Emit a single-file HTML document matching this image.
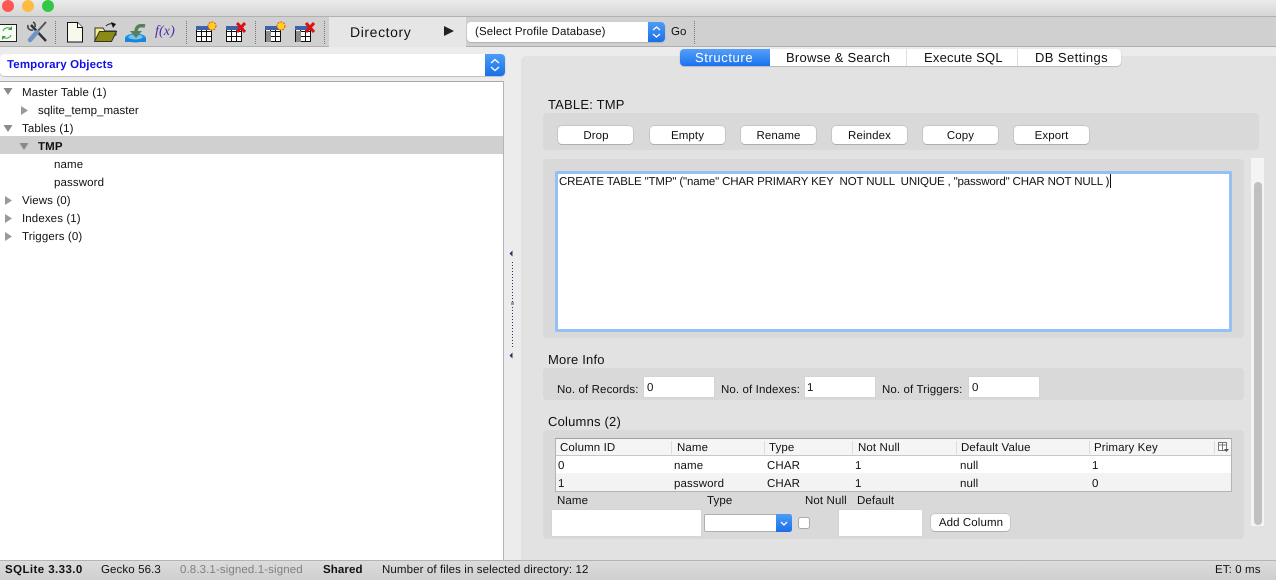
<!DOCTYPE html>
<html><head><meta charset="utf-8">
<style>
html,body{margin:0;padding:0;width:1276px;height:580px;overflow:hidden;background:#ececec;font-family:"Liberation Sans",sans-serif;font-size:11.5px;color:#111;text-rendering:geometricPrecision}
.a{position:absolute}
.t{position:absolute;white-space:pre;line-height:14px;letter-spacing:.11px;margin-top:1px}
.b{position:absolute;height:18px;width:75px;background:#fff;border-radius:4px;box-shadow:0 0 0 .5px #b4b4b4,0 1px 0 #a8a8a8;text-align:center;line-height:20px;letter-spacing:.1px;white-space:nowrap;text-indent:1px}
.sep{position:absolute;top:21px;height:23px;width:0;border-left:1px dotted #777}
.inp{position:absolute;background:#fff;border:1px solid #d4d4d4;box-sizing:border-box}
.h{font-size:13px;letter-spacing:.2px}
</style></head><body>

<!-- title bar -->
<div class="a" style="left:0;top:0;width:1276px;height:16px;background:linear-gradient(#ebebeb,#d6d6d6)"></div>
<div class="a" style="left:0;top:16px;width:1276px;height:1px;background:#b1b1b1"></div>
<div class="a" style="left:2px;top:0;width:12px;height:12px;border-radius:50%;background:#fc5753"></div>
<div class="a" style="left:22px;top:0;width:12px;height:12px;border-radius:50%;background:#fdbc40"></div>
<div class="a" style="left:42px;top:0;width:12px;height:12px;border-radius:50%;background:#33c748"></div>

<!-- toolbar -->
<div class="a" style="left:0;top:17px;width:1276px;height:29px;background:#d0d0d0;border-bottom:1px solid #aeaeae"></div>
<div class="a" style="left:329px;top:17px;width:137px;height:30px;background:#e6e6e6"></div>
<div class="sep" style="left:55px"></div><div class="sep" style="left:186px"></div><div class="sep" style="left:255px"></div><div class="sep" style="left:324px"></div><div class="sep" style="left:694px"></div>

<svg class="a" style="left:0;top:17px" width="460" height="30" viewBox="0 17 460 30">
<!-- refresh -->
<rect x="-4.500" y="24.500" width="21" height="17" fill="#f6fbf4" stroke="#222"/>
<path d="M3 31a5 5 0 0 1 8-2M11 35a5 5 0 0 1-8 2" fill="none" stroke="#3aa04a" stroke-width="1"/>
<path d="M12 26v4h-4zM2 40v-4h4z" fill="#3aa04a"/>
<!-- tools -->
<path d="M31 25l15 16" stroke="#333" stroke-width="2.500"/>
<path d="M28 25a4 4 0 0 0 5 5M33 22a4 4 0 0 1 2 5" stroke="#444" fill="none" stroke-width="1.600"/>
<path d="M46 22l-9 10" stroke="#555" stroke-width="2"/>
<path d="M37 32l-7 8" stroke="#6d94c4" stroke-width="4.500" stroke-linecap="round"/>
<!-- new file -->
<path d="M67.500 22.500h10l5 5v14.500h-15z" fill="#f8f8ec" stroke="#111"/>
<path d="M77.500 22.500v5h5" fill="#fff" stroke="#111"/>
<!-- folder -->
<path d="M95 28h8l2 3h11v4l-21 6z" fill="#f1ef8c" stroke="#333"/>
<path d="M94.500 41.500l5-10h17l-5 10z" fill="#8c8a12" stroke="#333"/>
<path d="M106 26q3-3 7-2" fill="none" stroke="#222"/>
<path d="M111 22l5 2-3 4z" fill="#111"/>
<!-- import -->
<ellipse cx="135.500" cy="38" rx="10.500" ry="4.500" fill="#1e93e4"/>
<rect x="125" y="38" width="21" height="4" fill="#1a86d9"/>
<ellipse cx="135.500" cy="37" rx="7" ry="2.500" fill="#79c3f2"/>
<path d="M145 26q-9-2-9 6" fill="none" stroke="#54805c" stroke-width="3.500"/>
<path d="M130 31h12l-6 7z" fill="#54805c"/>
<!-- tables -->
<path d="M196.500 26.500h15v15h-15zM196.500 31.500h15M196.500 36.500h15M201.500 30v12M206.500 30v12" fill="#fff" stroke="#111"/>
<path d="M196 26h15v4h-15z" fill="#3d63a8"/>
<circle cx="212" cy="26" r="4" fill="#ffd21e" stroke="#e84a12" stroke-dasharray="2 1"/>
<path d="M226.500 26.500h15v15h-15zM226.500 31.500h15M226.500 36.500h15M231.500 30v12M236.500 30v12" fill="#fff" stroke="#111"/>
<path d="M226 26h15v4h-15z" fill="#3d63a8"/>
<path d="M237 23l8 9M245 23l-8 9" stroke="#e01010" stroke-width="3"/>
<path d="M265.500 26.500h15v15h-15zM265.500 31.500h15M265.500 36.500h15M270.500 30v12M275.500 30v12" fill="#fff" stroke="#111"/>
<rect x="266" y="31" width="5" height="11" fill="#8c8c8c"/>
<path d="M265 26h15v4h-15z" fill="#3d63a8"/>
<circle cx="281" cy="26" r="4" fill="#ffd21e" stroke="#e84a12" stroke-dasharray="2 1"/>
<path d="M295.500 26.500h15v15h-15zM295.500 31.500h15M295.500 36.500h15M300.500 30v12M305.500 30v12" fill="#fff" stroke="#111"/>
<rect x="296" y="31" width="5" height="11" fill="#8c8c8c"/>
<path d="M295 26h15v4h-15z" fill="#3d63a8"/>
<path d="M306 23l8 9M314 23l-8 9" stroke="#e01010" stroke-width="3"/>
<path d="M444 26l10 5-10 5z" fill="#222"/>
</svg>
<div class="t" style="left:155px;top:24px;font-family:'Liberation Serif',serif;font-style:italic;font-size:14px;color:#4b2aa8">f(x)</div>
<div class="t" style="left:350px;top:24px;font-size:14px;letter-spacing:.6px">Directory</div>

<!-- profile select -->
<div class="a" style="left:467px;top:22px;width:198px;height:20px;background:#fff;border-radius:4px;box-shadow:0 .5px 1px #999"></div>
<div class="a" style="left:648px;top:22px;width:17px;height:20px;background:linear-gradient(#4c9cf8,#1a6fe8);border-radius:0 4px 4px 0"></div>
<svg class="a" style="left:648px;top:22px" width="17" height="20"><path d="M5 8l3.500-3 3.500 3M5 12l3.500 3 3.500-3" fill="none" stroke="#fff" stroke-width="1.300"/></svg>
<div class="t" style="left:475px;top:24px">(Select Profile Database)</div>
<div class="t" style="left:671px;top:24px">Go</div>

<!-- left combo -->
<div class="a" style="left:0;top:54px;width:505px;height:22px;background:#fff;border-radius:4px;box-shadow:0 .5px 1px #999"></div>
<div class="a" style="left:485px;top:54px;width:20px;height:22px;background:linear-gradient(#4c9cf8,#1a6fe8);border-radius:0 4px 4px 0"></div>
<svg class="a" style="left:485px;top:54px" width="20" height="22"><path d="M6 9l4-3.500 4 3.500M6 13l4 3.500 4-3.500" fill="none" stroke="#fff" stroke-width="1.300"/></svg>
<div class="t" style="left:7px;top:57px;color:#0f0fe8;font-weight:bold;letter-spacing:.13px">Temporary Objects</div>

<!-- tree -->
<div class="a" style="left:0;top:81px;width:503px;height:479px;background:#fff;border-top:1px solid #a8a8a8;border-right:1px solid #b4b4b4;box-sizing:content-box"></div>
<div class="a" style="left:0;top:136px;width:503px;height:18px;background:#d0d0d0"></div>
<svg class="a" style="left:0;top:82px" width="40" height="170">
<path d="M3.500 6h9l-4.500 7zM3.500 43h9l-4.500 7zM19.500 61h9l-4.500 7z" fill="#8a8a8a"/>
<path d="M21 24v9l7-4.500zM5 114v9l7-4.500zM5 132v9l7-4.500zM5 150v9l7-4.500z" fill="#9a9a9a"/>
</svg>
<div class="t" style="left:22px;top:85px">Master Table (1)</div>
<div class="t" style="left:38px;top:103px;letter-spacing:.02px">sqlite_temp_master</div>
<div class="t" style="left:22px;top:121px">Tables (1)</div>
<div class="t" style="left:38px;top:139px;font-weight:bold">TMP</div>
<div class="t" style="left:54px;top:157px">name</div>
<div class="t" style="left:54px;top:175px">password</div>
<div class="t" style="left:22px;top:193px">Views (0)</div>
<div class="t" style="left:22px;top:211px">Indexes (1)</div>
<div class="t" style="left:22px;top:229px">Triggers (0)</div>

<!-- splitter -->
<svg class="a" style="left:508px;top:248px" width="8" height="114">
<path d="M4.500 2.500v6l-3-3zM4.500 104.500v6l-3-3z" fill="#2e2e5c"/>
<path d="M4.500 14v86" stroke="#2e2e5c" stroke-dasharray="1 2"/>
<rect x="3" y="54" width="3" height="3" fill="#999"/>
</svg>

<!-- right panel -->
<div class="a" style="left:522px;top:57px;width:754px;height:503px;background:#e2e2e2;border-radius:4px 0 0 0;box-shadow:0 0 0 .5px #d6d6d6"></div>

<!-- tabs -->
<div class="a" style="left:680px;top:49px;width:441px;height:17px;background:#fff;border-radius:4px;box-shadow:0 .5px 1px #999"></div>
<div class="a" style="left:680px;top:49px;width:90px;height:17px;background:linear-gradient(#559ff8,#1a72f0);border-radius:4px 0 0 4px"></div>
<div class="a" style="left:906px;top:49px;width:1px;height:17px;background:#ddd"></div>
<div class="a" style="left:1017px;top:49px;width:1px;height:17px;background:#ddd"></div>
<div class="t h" style="left:695px;top:50px;color:#fff;letter-spacing:.6px">Structure</div>
<div class="t h" style="left:786px;top:50px;letter-spacing:.25px">Browse &amp; Search</div>
<div class="t h" style="left:924px;top:50px">Execute SQL</div>
<div class="t h" style="left:1035px;top:50px;letter-spacing:.4px">DB Settings</div>

<!-- table section -->
<div class="t h" style="left:548px;top:97px">TABLE: TMP</div>
<div class="a" style="left:543px;top:113px;width:716px;height:37px;background:#d9d9d9;border-radius:4px"></div>
<div class="b" style="left:558px;top:126px">Drop</div>
<div class="b" style="left:649.500px;top:126px">Empty</div>
<div class="b" style="left:740.500px;top:126px">Rename</div>
<div class="b" style="left:831.500px;top:126px">Reindex</div>
<div class="b" style="left:922.500px;top:126px">Copy</div>
<div class="b" style="left:1013.500px;top:126px">Export</div>

<div class="a" style="left:543px;top:159px;width:701px;height:179px;background:#d9d9d9;border-radius:4px"></div>
<div class="a" style="left:555px;top:171px;width:677px;height:161px;box-sizing:border-box;background:#fff;border:3px solid #94c0f5;border-radius:2px"></div>
<div class="t" style="left:559px;top:174px;letter-spacing:-.15px">CREATE TABLE "TMP" ("name" CHAR PRIMARY KEY  NOT NULL  UNIQUE , "password" CHAR NOT NULL )</div>
<div class="a" style="left:1110px;top:174px;width:1px;height:14px;background:#111"></div>

<!-- scrollbar -->
<div class="a" style="left:1251px;top:158px;width:13px;height:368px;background:#f4f4f4"></div>
<div class="a" style="left:1254px;top:182px;width:8px;height:343px;background:#c0c0c0;border-radius:4px"></div>

<!-- more info -->
<div class="t h" style="left:548px;top:352px">More Info</div>
<div class="a" style="left:543px;top:368px;width:701px;height:32px;background:#d9d9d9;border-radius:4px"></div>
<div class="t" style="left:557px;top:382px">No. of Records:</div>
<div class="inp" style="left:643px;top:376px;width:72px;height:22px"></div>
<div class="t" style="left:647px;top:380px">0</div>
<div class="t" style="left:721px;top:382px">No. of Indexes:</div>
<div class="inp" style="left:804px;top:376px;width:72px;height:22px"></div>
<div class="t" style="left:807px;top:380px">1</div>
<div class="t" style="left:882px;top:382px">No. of Triggers:</div>
<div class="inp" style="left:968px;top:376px;width:72px;height:22px"></div>
<div class="t" style="left:972px;top:380px">0</div>

<!-- columns -->
<div class="t h" style="left:548px;top:414px">Columns (2)</div>
<div class="a" style="left:543px;top:430px;width:701px;height:109px;background:#d9d9d9;border-radius:4px"></div>
<div class="a" style="left:555px;top:438px;width:677px;height:54px;box-sizing:border-box;background:#fff;border:1px solid #b4b4b4;border-top-color:#a0a0a0"></div>
<div class="a" style="left:556px;top:439px;width:675px;height:16px;background:#f5f5f5;border-bottom:1px solid #c8c8c8"></div>
<div class="a" style="left:556px;top:473px;width:675px;height:18px;background:#f3f3f3"></div>
<div class="a" style="left:671px;top:441px;width:1px;height:13px;background:#ddd"></div>
<div class="a" style="left:764px;top:441px;width:1px;height:13px;background:#ddd"></div>
<div class="a" style="left:852px;top:441px;width:1px;height:13px;background:#ddd"></div>
<div class="a" style="left:956px;top:441px;width:1px;height:13px;background:#ddd"></div>
<div class="a" style="left:1089px;top:441px;width:1px;height:13px;background:#ddd"></div>
<div class="a" style="left:1214px;top:441px;width:1px;height:13px;background:#ddd"></div>
<svg class="a" style="left:1218px;top:442px" width="11" height="11"><path d="M.5.500h8v8h-8zM.5 3h8M4.500.5v8" fill="#fff" stroke="#777"/><path d="M6 7h5l-2.500 3z" fill="#555"/></svg>
<div class="t" style="left:560px;top:440px">Column ID</div>
<div class="t" style="left:677px;top:440px">Name</div>
<div class="t" style="left:769px;top:440px">Type</div>
<div class="t" style="left:858px;top:440px">Not Null</div>
<div class="t" style="left:961px;top:440px">Default Value</div>
<div class="t" style="left:1094px;top:440px">Primary Key</div>
<div class="t" style="left:558px;top:458px">0</div><div class="t" style="left:674px;top:458px">name</div><div class="t" style="left:767px;top:458px">CHAR</div><div class="t" style="left:855px;top:458px">1</div><div class="t" style="left:960px;top:458px">null</div><div class="t" style="left:1092px;top:458px">1</div>
<div class="t" style="left:558px;top:476px">1</div><div class="t" style="left:674px;top:476px">password</div><div class="t" style="left:767px;top:476px">CHAR</div><div class="t" style="left:855px;top:476px">1</div><div class="t" style="left:960px;top:476px">null</div><div class="t" style="left:1092px;top:476px">0</div>

<div class="t" style="left:557px;top:493px">Name</div>
<div class="t" style="left:707px;top:493px">Type</div>
<div class="t" style="left:805px;top:493px">Not Null</div>
<div class="t" style="left:857px;top:493px">Default</div>
<div class="inp" style="left:551px;top:509px;width:151px;height:28px"></div>
<div class="a" style="left:704px;top:514px;width:88px;height:18px;box-sizing:border-box;background:#fff;border:1px solid #b0b0b0;border-radius:2px"></div>
<div class="a" style="left:776px;top:514px;width:16px;height:18px;background:linear-gradient(#4c9cf8,#1a6fe8);border-radius:0 3px 3px 0"></div>
<svg class="a" style="left:776px;top:514px" width="16" height="18"><path d="M5 8l3 3 3-3" fill="none" stroke="#fff" stroke-width="1.300"/></svg>
<div class="a" style="left:798px;top:517px;width:12px;height:12px;box-sizing:border-box;background:#fff;border:1px solid #aaa;border-radius:3px"></div>
<div class="inp" style="left:838px;top:509px;width:85px;height:28px"></div>
<div class="b" style="left:931px;top:514px;width:79px;height:17px;line-height:18px">Add Column</div>

<!-- status bar -->
<div class="a" style="left:0;top:560px;width:1276px;height:20px;background:linear-gradient(#dcdcdc,#cfcfcf);border-top:1px solid #b4b4b4;box-sizing:border-box"></div>
<div class="t" style="left:5px;top:562px;font-weight:bold;letter-spacing:.42px">SQLite 3.33.0</div>
<div class="t" style="left:101px;top:562px">Gecko 56.3</div>
<div class="t" style="left:180px;top:562px;color:#808080">0.8.3.1-signed.1-signed</div>
<div class="t" style="left:323px;top:562px;font-weight:bold;letter-spacing:.1px">Shared</div>
<div class="t" style="left:382px;top:562px">Number of files in selected directory: 12</div>
<div class="t" style="left:1215px;top:562px">ET: 0 ms</div>
</body></html>
